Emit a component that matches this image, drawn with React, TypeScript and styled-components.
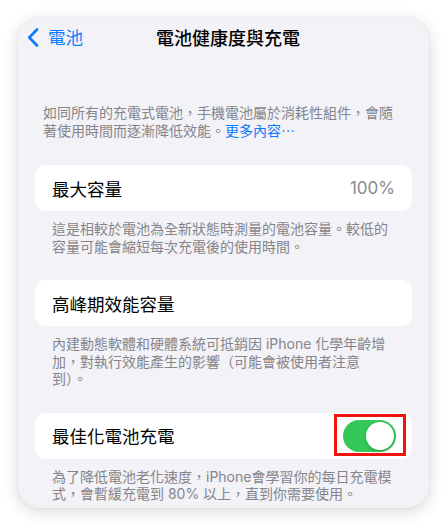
import React from "react";
import styled, { createGlobalStyle } from "styled-components";

const GlobalStyle = createGlobalStyle`
  html, body {
    margin: 0;
    padding: 0;
    background: #ffffff;
  }
  body {
    font-family: "Inter", "Noto Sans CJK TC", "Noto Sans", sans-serif;
    -webkit-font-smoothing: antialiased;
  }
`;

const Page = styled.div`
  padding: 18px 18px 18px 18px;
`;

const Phone = styled.div`
  width: 411px;
  height: 490px;
  background: #f2f2f7;
  border-radius: 22px;
  box-shadow: 0 3px 16px rgba(0, 0, 0, 0.16), 0 0 3px rgba(0, 0, 0, 0.05);
  overflow: hidden;
  display: flex;
  flex-direction: column;
`;

const NavBar = styled.div`
  height: 38px;
  display: grid;
  grid-template-columns: 1fr auto 1fr;
  align-items: center;
  padding: 0 0 0 9px;
`;

const BackButton = styled.div`
  display: flex;
  align-items: center;
  gap: 9px;
  color: #0a7aff;
  font-size: 17.5px;
  line-height: 22px;
  font-family: "Noto Sans CJK TC", sans-serif;
`;

const Title = styled.div`
  font-size: 18px;
  font-weight: 500;
  color: #000000;
  line-height: 22px;
  font-family: "Noto Sans CJK TC", sans-serif;
`;

const Content = styled.div`
  display: flex;
  flex-direction: column;
  padding: 0 17px;
`;

const Intro = styled.p`
  margin: 48px 0 0 0;
  padding: 0 8px;
  font-size: 14px;
  line-height: 17.6px;
  color: #85858b;
`;

const Link = styled.span`
  color: #0a7aff;
`;

const Section = styled.div<{ $first?: boolean }>`
  margin-top: ${(p) => (p.$first ? 26 : 25)}px;
  display: flex;
  flex-direction: column;
`;

const Card = styled.div`
  height: 46px;
  background: #ffffff;
  border-radius: 10px;
  display: flex;
  align-items: center;
  justify-content: space-between;
  padding: 0 17px;
`;

const Label = styled.span`
  font-size: 17.5px;
  color: #000000;
  font-family: "Noto Sans CJK TC", sans-serif;
`;

const Value = styled.span`
  font-size: 17px;
  color: #8a8a8e;
`;

const Footer = styled.p`
  margin: 9px 0 0 0;
  padding: 0 17px;
  font-size: 14px;
  line-height: 17.5px;
  color: #85858b;
`;

const ToggleWrap = styled.div`
  position: relative;
  margin-right: -1px;
`;

const Track = styled.div<{ $on: boolean }>`
  width: 53px;
  height: 32px;
  border-radius: 16px;
  background: ${(p) => (p.$on ? "#34c759" : "#e9e9eb")};
  display: flex;
  align-items: center;
  justify-content: ${(p) => (p.$on ? "flex-end" : "flex-start")};
  padding: 0 2px;
  box-sizing: border-box;
`;

const Knob = styled.div`
  width: 28px;
  height: 28px;
  border-radius: 50%;
  background: #ffffff;
  box-shadow: 0 2px 4px rgba(0, 0, 0, 0.15), 0 0 1px rgba(0, 0, 0, 0.1);
`;

const Highlight = styled.div`
  position: absolute;
  left: -9px;
  right: -10px;
  top: -6px;
  bottom: -4px;
  border: 3px solid #f2120e;
  pointer-events: none;
`;

const Chevron = () => (
  <svg width="12" height="19" viewBox="0 0 12 19" fill="none">
    <path
      d="M10 1.5 L2.3 9.5 L10 17.5"
      stroke="#0a7aff"
      strokeWidth="2.6"
      strokeLinecap="round"
      strokeLinejoin="round"
    />
  </svg>
);

const Toggle = ({ on }: { on: boolean }) => (
  <ToggleWrap>
    <Track $on={on}>
      <Knob />
    </Track>
    <Highlight />
  </ToggleWrap>
);

export default function App() {
  return (
    <>
      <GlobalStyle />
      <Page>
        <Phone>
          <NavBar>
            <BackButton>
              <Chevron />
              <span>電池</span>
            </BackButton>
            <Title>電池健康度與充電</Title>
            <div />
          </NavBar>
          <Content>
            <Intro>
              如同所有的充電式電池，手機電池屬於消耗性組件，會隨著使用時間而逐漸降低效能。
              <Link>更多內容⋯</Link>
            </Intro>

            <Section $first>
              <Card>
                <Label>最大容量</Label>
                <Value>100%</Value>
              </Card>
              <Footer>
                這是相較於電池為全新狀態時測量的電池容量。較低的容量可能會縮短每次充電後的使用時間。
              </Footer>
            </Section>

            <Section>
              <Card>
                <Label>高峰期效能容量</Label>
              </Card>
              <Footer>
                內建動態軟體和硬體系統可抵銷因 iPhone 化學年齡增加，對執行效能產生的影響（可能會被使用者注意
                <br />
                到）。
              </Footer>
            </Section>

            <Section>
              <Card>
                <Label>最佳化電池充電</Label>
                <Toggle on />
              </Card>
              <Footer>
                為了降低電池老化速度，iPhone會學習你的每日充電模式，會暫緩充電到 80% 以上，直到你需要使用。
              </Footer>
            </Section>
          </Content>
        </Phone>
      </Page>
    </>
  );
}
